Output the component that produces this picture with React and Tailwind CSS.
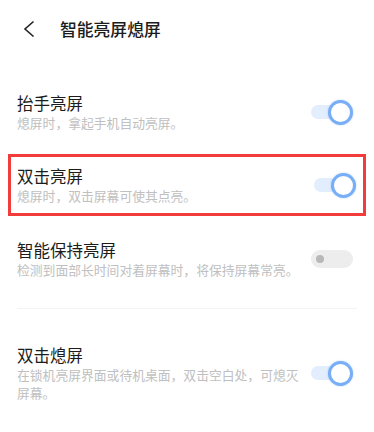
import React from "react";

const font = { fontFamily: '"Noto Sans CJK SC", "Noto Sans", sans-serif' };

function ToggleOn() {
  return (
    <div className="relative w-[42px] h-[25px] shrink-0 flex items-center">
      <div className="absolute left-0 top-[5.5px] w-[30px] h-[14px] rounded-full bg-[#e2edfd]" />
      <div className="absolute right-0 top-0 w-[25px] h-[25px] rounded-full bg-white border-[3px] border-[#78aef6] shadow-[0_0_2px_rgba(120,174,246,0.6)]" />
    </div>
  );
}

function ToggleOff() {
  return (
    <div className="w-[42px] h-[18px] shrink-0 rounded-full bg-[#ededed] flex items-center pl-[5px]">
      <div className="w-[8px] h-[8px] rounded-full bg-[#b8b8b8]" />
    </div>
  );
}

function Row({ title, sub, on, className = "" }) {
  return (
    <div className={"flex items-center justify-between " + className}>
      <div className="w-[286px]">
        <div className="text-[16.5px] leading-[22px] text-[#1c1c1c]">{title}</div>
        <div className="text-[12.8px] leading-[18px] text-[#c0c0c0]">{sub}</div>
      </div>
      {on ? <ToggleOn /> : <ToggleOff />}
    </div>
  );
}

export default function App() {
  return (
    <div className="w-[374px] h-[432px] bg-white overflow-hidden" style={font}>
      <div className="h-[58px] flex items-center">
        <svg width="14" height="18" viewBox="0 0 14 18" className="ml-[22px]">
          <polyline points="11.5,1.5 3,9 11.5,16.5" fill="none" stroke="#222" strokeWidth="1.6" strokeLinejoin="miter" />
        </svg>
        <div className="ml-[24px] text-[16.8px] font-medium text-[#1c1c1c] leading-[22px]">智能亮屏熄屏</div>
      </div>
      <div className="h-[17px]" />
      <Row className="pl-[17px] pr-[21px] py-[17px]" title="抬手亮屏" sub="熄屏时，拿起手机自动亮屏。" on />
      <div className="mx-[8px] mt-[5px] mb-[6px] border-[3px] border-[#f23b3b] pl-[6px] pr-[7px] py-[8px]">
        <Row title="双击亮屏" sub="熄屏时，双击屏幕可使其点亮。" on />
      </div>
      <Row className="pl-[17px] pr-[21px] py-[17px]" title="智能保持亮屏" sub="检测到面部长时间对着屏幕时，将保持屏幕常亮。" on={false} />
      <div className="mt-[12px] mx-[17px] h-px bg-[#f3f3f3]" />
      <Row className="pl-[17px] pr-[21px] pt-[35px] pb-[17px]" title="双击熄屏" sub="在锁机亮屏界面或待机桌面，双击空白处，可熄灭屏幕。" on />
    </div>
  );
}
